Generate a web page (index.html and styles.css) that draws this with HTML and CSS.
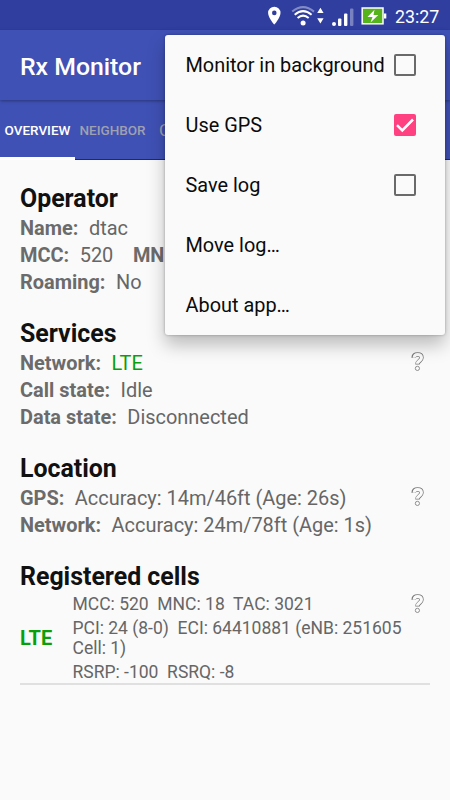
FILE: index.html
```html
<!DOCTYPE html>
<html lang="en">
<head>
<meta charset="utf-8">
<title>Rx Monitor</title>
<link rel="stylesheet" href="styles.css">
</head>
<body>
<svg class="defs" aria-hidden="true">
  <symbol id="help" viewBox="0 0 14 20">
    <path class="help-edge" d="M2.6 5.8C2.7 3.5 4.3 2.5 6.6 2.5C9 2.5 10.5 3.6 10.5 5.7C10.5 8.7 6.5 8.8 6.5 12.4"/>
    <circle class="help-dot" cx="6.4" cy="16.4" r="2.1"/>
    <path class="help-fill" d="M3.1 5.8C3.2 3.5 4.3 2.5 6.6 2.5C9 2.5 10.5 3.6 10.5 5.7C10.5 8.7 6.5 8.8 6.5 11.7"/>
  </symbol>
</svg>
<div class="screen">
  <header class="status">
    <svg class="status-icons" viewBox="0 0 128 30">
      <path fill="#fff" fill-rule="evenodd" d="M6.3 6.7a6.2 6.2 0 0 0-6.2 6.2c0 4.7 6.2 11.6 6.2 11.6s6.2-6.9 6.2-11.6a6.2 6.2 0 0 0-6.2-6.2zm0 3.9a2.3 2.3 0 1 1 0 4.6a2.3 2.3 0 0 1 0-4.6z"/>
      <g fill="none" stroke="#fff" stroke-width="2">
        <path opacity=".4" d="M24.2 11.6Q35 2.7 46 11.6"/>
        <path d="M26.7 14.7Q35 7.5 43.6 14.7M29.6 18Q35 13.2 40.7 18"/>
      </g>
      <circle cx="35.1" cy="23" r="2.5" fill="#fff"/>
      <path fill="#fff" d="M49.2 13L52.4 7.8L55.6 13zM49.2 18.2H55.6L52.4 23.4z"/>
      <g fill="#fff"><circle cx="66" cy="24" r="2"/><rect x="70" y="18.5" width="3.4" height="7.5" rx="1"/><rect x="76" y="13.5" width="3.4" height="12.5" rx="1"/><rect x="82" y="8.5" width="3.4" height="17.5" rx="1" opacity=".35"/></g>
      <rect x="94.2" y="8" width="20.8" height="15.8" fill="#55b31b" stroke="#fff" stroke-width="1.5"/>
      <rect x="116" y="13.5" width="2.3" height="5" fill="#fff"/>
      <path fill="#fff" d="M106.5 9.7L99.5 17H104.5L102.5 22.5L110.3 15H105.5z"/>
    </svg>
    <span class="clock">23:27</span>
  </header>
  <div class="toolbar"><h1>Rx Monitor</h1></div>
  <nav class="tabs">
    <span class="tab active">OVERVIEW</span>
    <span class="tab">NEIGHBOR</span>
    <span class="tab next">C</span>
  </nav>
  <main>
    <section>
      <h2>Operator</h2>
      <p><b>Name:</b><span>dtac</span></p>
      <p><b>MCC:</b><span>520</span><b class="second">MN</b></p>
      <p><b>Roaming:</b><span>No</span></p>
    </section>
    <section>
      <h2>Services</h2>
      <p><b>Network:</b><span class="green">LTE</span><svg class="help"><use href="#help"/></svg></p>
      <p><b>Call state:</b><span>Idle</span></p>
      <p><b>Data state:</b><span>Disconnected</span></p>
    </section>
    <section>
      <h2>Location</h2>
      <p><b>GPS:</b><span>Accuracy: 14m/46ft (Age: 26s)</span><svg class="help"><use href="#help"/></svg></p>
      <p><b>Network:</b><span>Accuracy: 24m/78ft (Age: 1s)</span></p>
    </section>
    <section>
      <h2>Registered cells</h2>
      <div class="cell">
        <b class="tech green">LTE</b>
        <div class="details">
          <div>MCC: 520&nbsp; MNC: 18&nbsp; TAC: 3021<svg class="help"><use href="#help"/></svg></div>
          <div>PCI: 24 (8-0)&nbsp; ECI: 64410881 (eNB: 251605<br>Cell: 1)</div>
          <div>RSRP: -100&nbsp; RSRQ: -8</div>
        </div>
      </div>
    </section>
  </main>
  <div class="menu">
    <div class="item">Monitor in background<i class="box"></i></div>
    <div class="item">Use GPS<i class="box checked"><svg viewBox="0 0 22 22"><path d="M3 11.2L8.3 16.4L19 5.5"/></svg></i></div>
    <div class="item">Save log<i class="box"></i></div>
    <div class="item">Move log…</div>
    <div class="item">About app…</div>
  </div>
</div>
</body>
</html>
```
FILE: styles.css
```css
* { box-sizing: border-box; }
body, h1, h2, p { margin: 0; }
body { font-family: Roboto, sans-serif; }
.defs { position: absolute; width: 0; height: 0; }
.screen {
  position: relative;
  width: 450px;
  height: 800px;
  overflow: hidden;
  background: #fafafa;
}
.status {
  height: 30px;
  display: flex;
  background: #303f9f;
  color: #fff;
  padding-left: 268px;
}
.status-icons { width: 128px; height: 30px; margin-right: -1px; flex: none; }
.clock { font-size: 17.8px; line-height: 33px; }
.toolbar {
  height: 70px;
  display: flex;
  align-items: center;
  padding: 2px 20px 0;
  background: #3f51b5;
  position: relative;
  box-shadow: 0 1px 3px rgba(0, 0, 0, .35);
}
h1 { font-size: 24.8px; font-weight: 500; color: #fff; }
.tabs {
  height: 60px;
  display: flex;
  background: #3f51b5;
  border-bottom: 1px solid #1a2781;
  color: #9fa0b0;
  font-size: 13.5px;
  font-weight: 500;
  line-height: 61px;
}
.tab { width: 75px; text-align: center; white-space: nowrap; flex: none; }
.tab.active { color: #fff; height: 60px; border-bottom: 3px solid #fff; }
.tab.next { padding-left: 9px; font-size: 17px; font-weight: 400; text-align: left; }
main { padding: 24px 20px 0; }
section { margin-bottom: 24px; }
h2 {
  height: 30px;
  font-size: 24.9px;
  line-height: 30px;
  font-weight: 700;
  color: #111;
}
p {
  display: flex;
  height: 27px;
  font-size: 19.95px;
  line-height: 29px;
  color: #666;
  white-space: nowrap;
}
p b { margin-right: 10.5px; color: #6b6b6b; }
p .second { margin: 0 0 0 19.6px; }
.green, p .green { color: #0a9f0a; }
.help { width: 14px; height: 20px; margin: 3px 5px 0 auto; flex: none; }
.help-edge { fill: none; stroke: #777; stroke-width: 4.4; }
.help-fill { fill: none; stroke: #fafafa; stroke-width: 3; }
.help-dot { fill: #fafafa; stroke: #777; stroke-width: .8; }
.cell {
  display: flex;
  align-items: center;
  height: 93px;
  padding-top: 1px;
  border-bottom: 2px solid #e0e0e0;
}
.tech { width: 52.5px; font-size: 20px; }
.details { flex: 1; font-size: 17.5px; line-height: 20px; color: #666; white-space: nowrap; }
.details > div { display: block; margin-bottom: 4px; }
.details > div:first-child { display: flex; }
.details > div:last-child { margin-bottom: 0; }
.details .help { margin-top: 0; }
.menu {
  position: absolute;
  left: 165px;
  top: 35px;
  width: 280px;
  height: 300px;
  border-radius: 3px;
  background: #fafafa;
  box-shadow: 0 10px 18px rgba(0, 0, 0, .25), 0 0 3px rgba(0, 0, 0, .3);
}
.item {
  height: 60px;
  display: flex;
  align-items: center;
  padding: 1px 29px 0 20.5px;
  font-size: 19.9px;
  color: #0b0b0b;
  white-space: nowrap;
}
.box {
  width: 22px;
  height: 22px;
  margin: -1px 0 0 auto;
  border: 2px solid #6a6a6a;
  border-radius: 2px;
  flex: none;
}
.box.checked { border: 0; background: #ff4081; }
.box svg { display: block; width: 22px; height: 22px; fill: none; stroke: #fff; stroke-width: 2.5; }
```
